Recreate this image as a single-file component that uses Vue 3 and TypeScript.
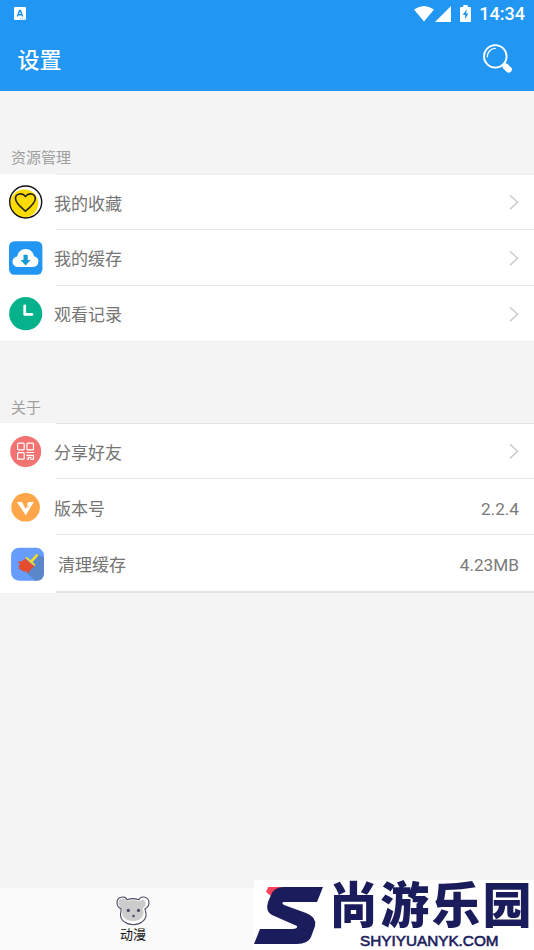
<script setup lang="ts">
type IconName = 'heart' | 'cloud' | 'clock' | 'qr' | 'version' | 'broom'

interface Row {
  icon: IconName
  label: string
  value?: string
}

interface Group {
  title: string
  name: string
  rows: Row[]
}

const groups: Group[] = [
  {
    title: '资源管理',
    name: 'resources',
    rows: [
      { icon: 'heart', label: '我的收藏' },
      { icon: 'cloud', label: '我的缓存' },
      { icon: 'clock', label: '观看记录' },
    ],
  },
  {
    title: '关于',
    name: 'about',
    rows: [
      { icon: 'qr', label: '分享好友' },
      { icon: 'version', label: '版本号', value: '2.2.4' },
      { icon: 'broom', label: '清理缓存', value: '4.23MB' },
    ],
  },
]
</script>

<template>
  <div class="screen">
    <header class="header">
      <div class="status">
        <svg class="status-app" width="12" height="13" viewBox="0 0 12 13">
          <rect width="12" height="13" rx="1" fill="#fff" />
          <path d="M3.4 9.6 5.6 3.4h.8l2.2 6.2M4.2 7.8h3.6" fill="none" stroke="#2196f3" stroke-width="1.5" />
          <path d="M6 11.8h1.3M8 11.8h1M9.8 11.8h1" stroke="#2196f3" stroke-width=".7" />
        </svg>
        <div class="status-right">
          <svg width="20" height="16" viewBox="0 0 20 16">
            <path d="M0 3.6Q10-3.4 20 3.6L10 15.6Z" fill="#fff" />
          </svg>
          <svg class="signal" width="16" height="16" viewBox="0 0 16 16">
            <path d="M16 0V16H0Z" fill="#fff" />
          </svg>
          <svg class="battery" width="11" height="17" viewBox="0 0 11 17">
            <path d="M3.3 0h4.4v2H10q1 0 1 1v13q0 1-1 1H1q-1 0-1-1V3q0-1 1-1h2.3Z" fill="#fff" />
            <path d="M6.6 4.2 2.8 10h2.3v4.3L8.4 8.6H6.2Z" fill="#2196f3" />
          </svg>
          <span class="time">14:34</span>
        </div>
      </div>
      <div class="toolbar">
        <h1 class="title">设置</h1>
        <svg class="search" width="30" height="30" viewBox="0 0 30 30">
          <circle cx="12.3" cy="12.4" r="11.3" fill="none" stroke="#fff" stroke-width="1.8" />
          <path d="M4.2 12.7A8.3 8.3 0 0 1 12.3 4.4" fill="none" stroke="#fff" stroke-width="1.4" stroke-linecap="round" />
          <path d="m19.4 20 2.8 2.5" stroke="#fff" stroke-width="2.5" />
          <path d="m22.6 22.5 3.1 3" stroke="#fff" stroke-width="6.3" stroke-linecap="round" />
        </svg>
      </div>
    </header>

    <main class="content">
      <section v-for="group in groups" :key="group.name" class="group" :class="group.name">
        <h2 class="group-title">{{ group.title }}</h2>
        <div class="list">
          <div v-for="row in group.rows" :key="row.label" class="row" :class="row.icon">
            <div class="icon">
              <svg v-if="row.icon === 'heart'" width="34" height="34" viewBox="0 0 34 34">
                <circle cx="16.7" cy="17" r="16" fill="#fff" />
                <circle cx="15.2" cy="18.5" r="14" fill="#ffdc00" />
                <circle cx="16.7" cy="17" r="16" fill="none" stroke="#111" stroke-width="1.4" />
                <path d="M16.5 26.2C12.7 23.1 6.5 18.4 6.5 13.6 6.5 8.5 13.4 7.3 16.5 11.5 19.7 7.3 26.3 8.5 26.3 13.6 26.3 18.4 20.4 23.1 16.5 26.2Z" fill="none" stroke="#222" stroke-width="1.6" stroke-linejoin="round" />
              </svg>
              <svg v-else-if="row.icon === 'cloud'" width="34" height="34" viewBox="0 0 34 34">
                <rect y=".2" width="33.4" height="33.6" rx="5.5" fill="#2196f3" />
                <path d="M9.3 26A5.3 5.3 0 0 1 8.3 15.4C9 10.9 12.5 8 16.7 8S24.3 10.9 25 15.3A5.4 5.4 0 0 1 24 26Z" fill="#fff" />
                <path d="M14.5 13.8h4.2v5.1h3l-5.1 5.5-5.1-5.5h3Z" fill="#169bd5" />
              </svg>
              <svg v-else-if="row.icon === 'clock'" width="34" height="34" viewBox="0 0 34 34">
                <circle cx="16.7" cy="16.7" r="16.6" fill="#05b28b" />
                <path d="M15.7 8.8v8.6h7.3" fill="none" stroke="#fff" stroke-width="2.7" stroke-linecap="round" stroke-linejoin="round" />
              </svg>
              <svg v-else-if="row.icon === 'qr'" width="34" height="34" viewBox="0 0 34 34">
                <circle cx="16.7" cy="17.5" r="15.5" fill="#f37272" />
                <g fill="none" stroke="#fff" stroke-width="1.2">
                  <rect x="8.6" y="9.2" width="6.6" height="6.6" rx="1" />
                  <rect x="17.9" y="9.2" width="6.6" height="6.6" rx="1" />
                  <rect x="8.6" y="18.6" width="6.6" height="6.6" rx="1" />
                  <path d="M17.3 18.5h7.8M17.3 21.4h7.2v3.8h-3.6M17.8 25.2h1.6v-1.8h3" />
                </g>
              </svg>
              <svg v-else-if="row.icon === 'version'" width="34" height="34" viewBox="0 0 34 34">
                <circle cx="16.6" cy="17.3" r="14.3" fill="#ffa64b" />
                <path d="M7.9 12h5l3.8 7.1 1.7-3-.8-1.5 2-2.6h5.2l-8 13.2Z" fill="#fff" />
                <path d="m17 13.6 2.7 3.7" stroke="#ffa64b" stroke-width=".9" />
              </svg>
              <svg v-else width="34" height="34" viewBox="0 0 34 34">
                <rect x=".1" y=".7" width="32.9" height="33" rx="8" fill="#669dff" />
                <path d="m27 7.5 6 3V25.7q0 8-7.5 8H24L15.5 25.5Z" fill="#5a87ca" />
                <path d="M14.2 11.4 23.3 19.8 20.6 21.6 17 26.2 15.2 25 14.8 23.5 13.2 25 7.8 21.4 8.8 19.7 7 20.1 9 17 6.4 14.4C10 15 12.2 13.6 14.2 11.4Z" fill="#e54d2e" />
                <path d="m15.1 10.3 8.8 8.1" stroke="#f8dc21" stroke-width="1.8" />
                <path d="m20.8 13.8 5.1-5.5" stroke="#f8dc21" stroke-width="2.5" stroke-linecap="round" />
              </svg>
            </div>
            <div class="row-body">
              <span class="label">{{ row.label }}</span>
              <span v-if="row.value" class="value">{{ row.value }}</span>
              <svg v-else class="chevron" width="10" height="16" viewBox="0 0 10 16">
                <path d="m1 1.3 7.6 7L1 15.3" fill="none" stroke="#c4c4c4" stroke-width="1.2" />
              </svg>
            </div>
          </div>
        </div>
      </section>
    </main>

    <nav class="tabs">
      <div class="tab">
        <svg width="34" height="30" viewBox="0 0 34 30">
          <path d="M5.2 12.8C-.4 10.8-.3 2.7 5 1.3 8 .4 10.2 1.7 11.1 3.8Q17 1.4 22.8 3.8C24 1.5 26.2.5 29 1.3 34.4 3 34.2 10.6 29 12.8L30 17.8C30.6 24.2 24 28.7 17.3 28.7S3.8 24.2 4.6 17.8Z" fill="#fff" />
          <path d="M6.5 12.5C1 10.5 1.6 3.5 5.5 2.7 8.2 2.1 10 3.4 11 5.3Q18 2.5 23 5.5C25.5 3.5 28 2.9 29.2 5.4 30.4 8.6 29 11.2 26.7 12.3 29.5 19 25.5 25 17.5 25 9.7 25 4.5 20.5 6.5 12.5Z" fill="#ccc" />
          <path d="M5.2 12.8C-.4 10.8-.3 2.7 5 1.3 8 .4 10.2 1.7 11.1 3.8Q17 1.4 22.8 3.8C24 1.5 26.2.5 29 1.3 34.4 3 34.2 10.6 29 12.8L30 17.8C30.6 24.2 24 28.7 17.3 28.7S3.8 24.2 4.6 17.8Z" fill="none" stroke="#514966" stroke-width="1.1" />
          <g fill="#514966">
            <circle cx="12.3" cy="14.4" r="1.6" />
            <circle cx="22.5" cy="14.4" r="1.6" />
            <circle cx="17.5" cy="20" r="1.3" />
          </g>
        </svg>
        <span>动漫</span>
      </div>
    </nav>

    <aside class="brand">
      <svg class="brand-mark" width="70" height="60" viewBox="0 0 70 60">
        <path d="M14.3 0H30L17 9 12 5Z" fill="#ff4059" />
        <path d="M30 0H69L63 15H31Q26 15 30 18L52 26Q63 30 61 39L57 50Q54 57 43 57H0L6 42H38Q44 42 43 39L18 28Q11 24 14 15L17 8Q20 0 30 0Z" fill="#1b1c5b" />
      </svg>
      <div class="brand-text">
        <strong>尚游乐园</strong>
        <span>SHYIYUANYK.COM</span>
      </div>
    </aside>
  </div>
</template>

<style>
body {
  margin: 0;
}
</style>

<style scoped>
.screen {
  position: relative;
  display: flex;
  flex-direction: column;
  width: 534px;
  height: 950px;
  overflow: hidden;
  background: #f4f4f4;
  font-family: Roboto, "Noto Sans CJK SC", sans-serif;
}
svg {
  display: block;
  flex: none;
}
.header {
  height: 91px;
  background: #2196f3;
  color: #fff;
}
.status {
  display: flex;
  align-items: center;
  justify-content: space-between;
  height: 27px;
  padding: 0 9px 0 14px;
}
.status-right {
  display: flex;
  align-items: center;
}
.signal {
  margin-left: 1px;
}
.battery {
  margin: 0 8px 0 9px;
}
.time {
  font-size: 18px;
  line-height: 27px;
  font-weight: 500;
}
.toolbar {
  display: flex;
  align-items: center;
  justify-content: space-between;
  height: 64px;
  padding: 0 21px 0 17.5px;
}
.title {
  margin: 0;
  padding-top: 3px;
  font-size: 22px;
  line-height: 32px;
  font-weight: 500;
}
.content {
  flex: 1;
}
.group-title {
  box-sizing: border-box;
  height: 83px;
  margin: 0;
  padding: 56px 0 0 11px;
  color: #9e9e9e;
  font-size: 15px;
  line-height: 22px;
  font-weight: 400;
}
.about .group-title {
  height: 82px;
}
.list {
  background: #fff;
}
.row {
  display: flex;
  align-items: center;
  height: 56px;
  padding-left: 9px;
}
.resources .row:last-child {
  height: 55px;
}
.about .row:last-child {
  height: 58px;
}
.icon {
  width: 47px;
}
.broom .icon {
  box-sizing: border-box;
  padding-left: 2px;
}
.row-body {
  display: flex;
  flex: 1;
  align-items: center;
  justify-content: space-between;
  align-self: stretch;
  box-sizing: border-box;
  padding-right: 15px;
  border-bottom: 1px solid #e6e6e6;
}
.resources .row:last-child .row-body {
  border-bottom: 0;
}
.row:first-child .row-body {
  border-top: 1px solid #ececec;
}
.about .row:first-child .row-body {
  border-top-color: #e2e2e2;
}
.broom .row-body {
  border-bottom: 2px solid #e2e2e2;
}
.label {
  margin-left: -2px;
  padding-top: 3px;
  color: #757575;
  font-size: 17px;
  line-height: 26px;
}
.about .label {
  padding-top: 4px;
}
.broom .label {
  margin-left: 2px;
}
.value {
  padding-top: 4px;
  color: #7a7a7a;
  font-size: 17.2px;
  line-height: 24px;
}
.tabs {
  display: flex;
  height: 62px;
  background: #fafafa;
}
.tab {
  display: flex;
  flex-direction: column;
  align-items: center;
  width: 266px;
  padding-top: 8px;
  color: #111;
  font-size: 13px;
  line-height: 18px;
}
.brand {
  position: absolute;
  right: 0;
  bottom: 0;
  display: flex;
  box-sizing: border-box;
  width: 280px;
  height: 70px;
  background: #fff;
  color: #1b1c5b;
}
.brand-mark {
  margin-top: 7px;
}
.brand-text {
  display: flex;
  flex-direction: column;
  margin-left: 5px;
}
.brand-text strong {
  font-size: 49px;
  line-height: 54px;
  font-weight: 900;
  letter-spacing: 2.2px;
  white-space: nowrap;
}
.brand-text span {
  margin-left: 31px;
  font: 400 15.3px/14px "Liberation Sans", sans-serif;
  -webkit-text-stroke: 0.6px currentColor;
}
</style>
